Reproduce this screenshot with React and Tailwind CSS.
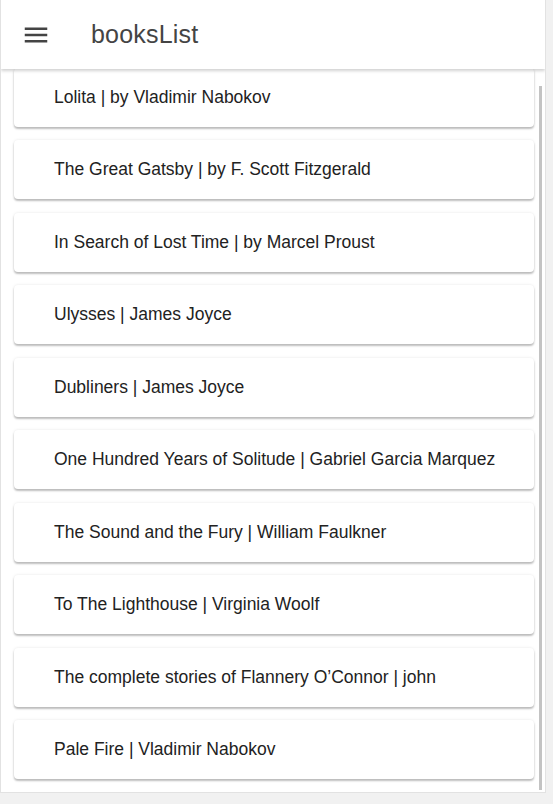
import React from "react";

const books = [
  "Lolita | by Vladimir Nabokov",
  "The Great Gatsby | by F. Scott Fitzgerald",
  "In Search of Lost Time | by Marcel Proust",
  "Ulysses | James Joyce",
  "Dubliners | James Joyce",
  "One Hundred Years of Solitude | Gabriel Garcia Marquez",
  "The Sound and the Fury | William Faulkner",
  "To The Lighthouse | Virginia Woolf",
  "The complete stories of Flannery O\u2019Connor | john",
  "Pale Fire | Vladimir Nabokov",
];

export default function App() {
  return (
    <div
      className="w-[553px] h-[804px] bg-[#f1f1f1] overflow-hidden"
      style={{ fontFamily: '"Liberation Sans", Arial, sans-serif' }}
    >
      <div className="w-[546px] h-[793px] bg-white border-l border-r border-b border-[#e2e2e2] flex flex-col overflow-hidden">
        <header className="relative z-10 h-[69px] shrink-0 bg-white flex items-center shadow-[0_2px_3px_rgba(0,0,0,0.18)]">
          <svg
            width="30"
            height="30"
            viewBox="0 0 24 24"
            className="ml-[20px] mt-[1px]"
            fill="#444"
          >
            <path d="M3 18h18v-2H3v2zm0-5h18v-2H3v2zm0-7v2h18V6H3z" />
          </svg>
          <h1 className="ml-[40px] text-[25px] text-[#444] tracking-[0.2px] leading-none">
            booksList
          </h1>
        </header>
        <div className="flex flex-1 min-h-0 mt-[-1.5px]">
          <div className="flex flex-col gap-[13.5px] pl-[13px] pr-[3px] w-[536px] pb-[13px]">
            {books.map((b) => (
              <div
                key={b}
                className="h-[59px] shrink-0 bg-white rounded-[4px] flex items-center pl-[40px] text-[17.5px] text-[#222] shadow-[0_2px_2px_rgba(0,0,0,0.24),0_0_3px_rgba(0,0,0,0.1)]"
              >
                {b}
              </div>
            ))}
          </div>
          <div className="w-[3px] bg-[#c3c3c3] mt-[18.5px] mb-[2px] ml-[2px]" />
        </div>
      </div>
    </div>
  );
}
